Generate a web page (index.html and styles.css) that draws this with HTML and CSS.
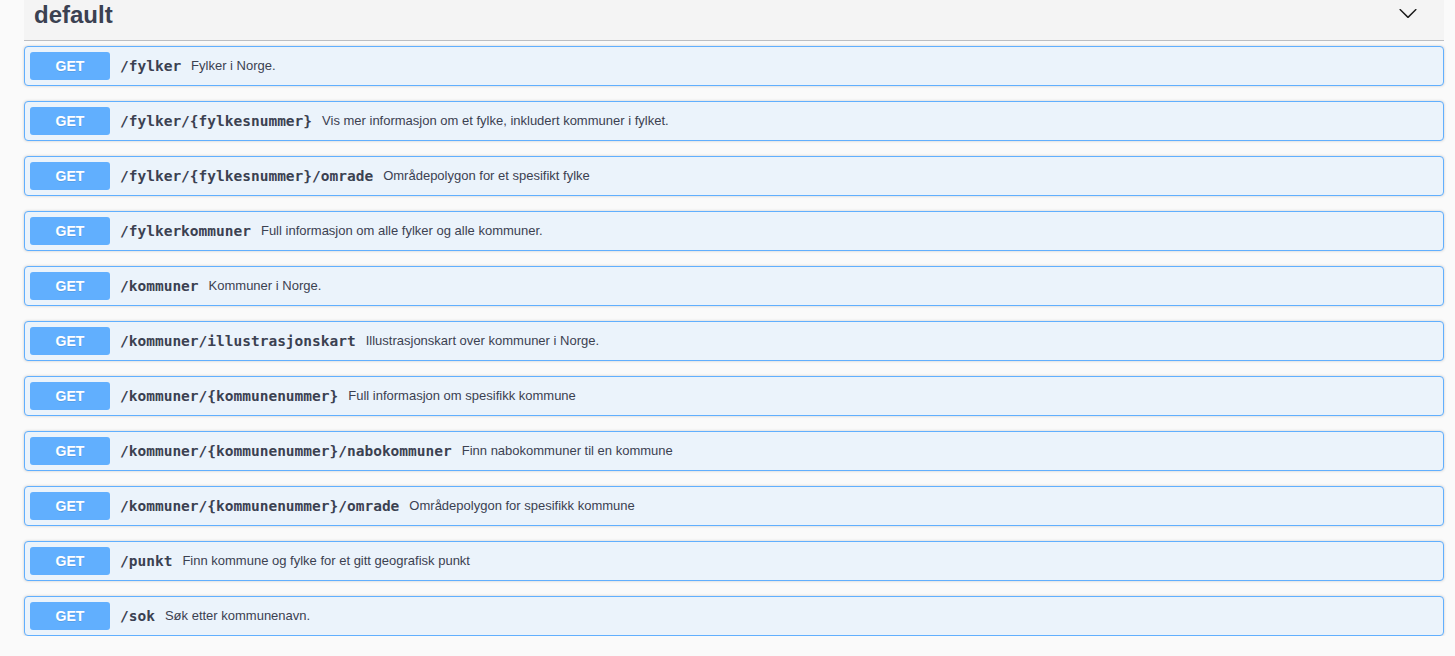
FILE: index.html
```html
<!DOCTYPE html>
<html lang="no">
<head>
<meta charset="utf-8">
<title>default</title>
<link rel="stylesheet" href="styles.css">
</head>
<body>
<div class="wrapper">
  <div class="tag-header">
    <h3 class="tag-title">default</h3>
    <svg class="chevron" width="20" height="20" viewBox="0 0 20 20" aria-hidden="true"><path d="M17.418 6.109c.272-.268.709-.268.979 0s.271.701 0 .969l-7.908 7.83c-.27.268-.707.268-.979 0l-7.908-7.830c-.27-.268-.27-.701 0-.969.271-.268.709-.268.979 0L10 13.25l7.418-7.141z"/></svg>
  </div>
  <div class="ops">
    <div class="op"><span class="method">GET</span><span class="path">/fylker</span><span class="desc">Fylker i Norge.</span></div>
    <div class="op"><span class="method">GET</span><span class="path">/fylker/{fylkesnummer}</span><span class="desc">Vis mer informasjon om et fylke, inkludert kommuner i fylket.</span></div>
    <div class="op"><span class="method">GET</span><span class="path">/fylker/{fylkesnummer}/omrade</span><span class="desc">Områdepolygon for et spesifikt fylke</span></div>
    <div class="op"><span class="method">GET</span><span class="path">/fylkerkommuner</span><span class="desc">Full informasjon om alle fylker og alle kommuner.</span></div>
    <div class="op"><span class="method">GET</span><span class="path">/kommuner</span><span class="desc">Kommuner i Norge.</span></div>
    <div class="op"><span class="method">GET</span><span class="path">/kommuner/illustrasjonskart</span><span class="desc">Illustrasjonskart over kommuner i Norge.</span></div>
    <div class="op"><span class="method">GET</span><span class="path">/kommuner/{kommunenummer}</span><span class="desc">Full informasjon om spesifikk kommune</span></div>
    <div class="op"><span class="method">GET</span><span class="path">/kommuner/{kommunenummer}/nabokommuner</span><span class="desc">Finn nabokommuner til en kommune</span></div>
    <div class="op"><span class="method">GET</span><span class="path">/kommuner/{kommunenummer}/omrade</span><span class="desc">Områdepolygon for spesifikk kommune</span></div>
    <div class="op"><span class="method">GET</span><span class="path">/punkt</span><span class="desc">Finn kommune og fylke for et gitt geografisk punkt</span></div>
    <div class="op"><span class="method">GET</span><span class="path">/sok</span><span class="desc">Søk etter kommunenavn.</span></div>
  </div>
</div>
</body>
</html>
```
FILE: styles.css
```css
html, body {
  margin: 0;
  padding: 0;
  background: #fafafa;
  font-family: "Liberation Sans", Arial, sans-serif;
  color: #3b4151;
}

.wrapper {
  padding: 0 11px 0 24px;
}

.tag-header {
  display: flex;
  justify-content: space-between;
  align-items: flex-start;
  padding: 0 26px 10px 10px;
  background: #f4f4f4;
  border-bottom: 1px solid rgba(59, 65, 81, 0.3);
  margin-bottom: 5px;
}

.tag-title {
  margin: 0;
  font-size: 24px;
  line-height: 30px;
  font-weight: 700;
  color: #3b4151;
}

.chevron {
  margin-top: 3px;
  fill: #1b1b1b;
}

.ops {
  display: flex;
  flex-direction: column;
  gap: 15px;
}

.op {
  display: flex;
  align-items: center;
  padding: 5px;
  border: 1px solid #61affe;
  border-radius: 4px;
  background: #ebf3fb;
  box-shadow: 0 0 3px rgba(0, 0, 0, 0.19);
}

.method {
  box-sizing: border-box;
  min-width: 80px;
  height: 28px;
  padding: 6px 15px;
  border-radius: 3px;
  background: #61affe;
  color: #fff;
  font-size: 14px;
  line-height: 16px;
  font-weight: 700;
  text-align: center;
  text-shadow: 0 1px 0 rgba(0, 0, 0, 0.1);
}

.path {
  padding: 0 10px;
  font-family: "DejaVu Sans Mono", "Liberation Mono", monospace;
  font-size: 14.5px;
  font-weight: 700;
  color: #3b4151;
}

.desc {
  padding-bottom: 2px;
  font-size: 13px;
  color: #3b4151;
}
```
